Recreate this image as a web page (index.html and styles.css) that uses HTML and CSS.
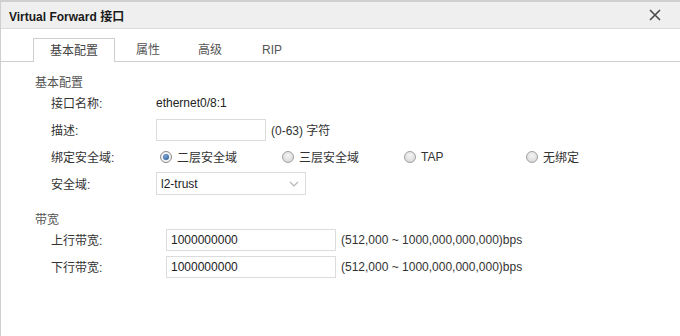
FILE: index.html
```html
<!DOCTYPE html>
<html lang="zh-CN">
<head>
  <meta charset="UTF-8">
  <title>Virtual Forward 接口</title>
  <link rel="stylesheet" href="styles.css">
</head>
<body>
  <div class="dialog">
    <!-- Title bar -->
    <div class="titlebar">
      <span class="title">Virtual Forward 接口</span>
      <span class="close">
        <svg width="12" height="12" viewBox="0 0 12 12">
          <path d="M1 1 L11 11 M11 1 L1 11" stroke="#4a4a4a" stroke-width="1.6" fill="none"/>
        </svg>
      </span>
    </div>

    <!-- Tabs -->
    <div class="tabs">
      <div class="tab active">基本配置</div>
      <div class="tab">属性</div>
      <div class="tab">高级</div>
      <div class="tab">RIP</div>
    </div>

    <!-- Basic config -->
    <div class="section">
      <div class="section-title">基本配置</div>
      <div class="row">
        <div class="label">接口名称:</div>
        <div class="value">ethernet0/8:1</div>
      </div>
      <div class="row">
        <div class="label">描述:</div>
        <div class="value">
          <span class="input desc"></span>
          <span class="hint">(0-63) 字符</span>
        </div>
      </div>
      <div class="row">
        <div class="label">绑定安全域:</div>
        <div class="value radios">
          <span class="option"><span class="radio checked"></span>二层安全域</span>
          <span class="option"><span class="radio"></span>三层安全域</span>
          <span class="option"><span class="radio"></span>TAP</span>
          <span class="option"><span class="radio"></span>无绑定</span>
        </div>
      </div>
      <div class="row">
        <div class="label">安全域:</div>
        <div class="value">
          <span class="select">
            <span>l2-trust</span>
            <svg width="10" height="6" viewBox="0 0 10 6">
              <path d="M1 1 L5 5 L9 1" stroke="#b5b5b5" stroke-width="1.2" fill="none"/>
            </svg>
          </span>
        </div>
      </div>
    </div>

    <!-- Bandwidth -->
    <div class="section bandwidth">
      <div class="section-title">带宽</div>
      <div class="row">
        <div class="label">上行带宽:</div>
        <div class="value">
          <span class="input bw">1000000000</span>
          <span class="hint">(512,000 ~ 1000,000,000,000)bps</span>
        </div>
      </div>
      <div class="row">
        <div class="label">下行带宽:</div>
        <div class="value">
          <span class="input bw">1000000000</span>
          <span class="hint">(512,000 ~ 1000,000,000,000)bps</span>
        </div>
      </div>
    </div>
  </div>
</body>
</html>
```

FILE: styles.css
```css
* {
  margin: 0;
  padding: 0;
  box-sizing: border-box;
}

body {
  font-family: "Liberation Sans", Arial, "Noto Sans CJK SC", sans-serif;
  font-size: 12px;
  color: #333;
  background: #fff;
}

.dialog {
  width: 680px;
  height: 336px;
  border-top: 2px solid #cfcfcf;
  border-left: 1px solid #cfcfcf;
  overflow: hidden;
}

/* Title bar */
.titlebar {
  height: 27px;
  background: #efefef;
  border-bottom: 1px solid #dadada;
  display: flex;
  align-items: center;
  justify-content: space-between;
  padding: 0 19px 0 8px;
}

.title {
  font-weight: bold;
  color: #1a1a1a;
}

.close {
  display: flex;
}

/* Tabs */
.tabs {
  display: flex;
  align-items: flex-end;
  padding: 9px 0 0 32px;
  border-bottom: 1px solid #cfcfcf;
  height: 33px;
}

.tab {
  width: 62px;
  height: 23px;
  line-height: 25px;
  text-align: center;
  color: #555;
}

.tab.active {
  width: 82px;
  margin-right: 2px;
  border: 1px solid #cfcfcf;
  border-bottom: none;
  background: #fff;
  height: 24px;
  margin-bottom: -1px;
  color: #444;
}

/* Sections */
.section {
  padding: 15px 0 0 34px;
}

.section.bandwidth {
  padding-top: 17px;
}

.section-title {
  line-height: 12px;
  color: #555;
}

.row {
  display: flex;
  align-items: center;
  height: 27px;
  padding-left: 16px;
}

.label {
  width: 105px;
  color: #333;
}

.bandwidth .label {
  width: 115px;
}

.value {
  display: flex;
  align-items: center;
  color: #222;
}

.input {
  display: inline-block;
  height: 22px;
  line-height: 20px;
  border: 1px solid #dcdcdc;
  padding-left: 4px;
  color: #222;
}

.input.desc {
  width: 110px;
}

.input.bw {
  width: 170px;
}

.hint {
  margin-left: 5px;
  color: #333;
}

/* Radios */
.radios {
  margin-left: 4px;
}

.option {
  display: flex;
  align-items: center;
  width: 122px;
  color: #333;
}

.radio {
  width: 12px;
  height: 12px;
  border-radius: 50%;
  border: 1px solid #a0a0a0;
  background: radial-gradient(circle at 50% 35%, #f4f4f4, #d4d4d4);
  margin-right: 5px;
  position: relative;
}

.radio.checked {
  background: #f2f2f2;
  border-color: #8a8a8a;
}

.radio.checked::after {
  content: "";
  position: absolute;
  left: 2px;
  top: 2px;
  width: 6px;
  height: 6px;
  border-radius: 50%;
  background: radial-gradient(circle at 40% 35%, #7fa8d8, #1f4f8c);
}

/* Select */
.select {
  width: 150px;
  height: 23px;
  border: 1px solid #dcdcdc;
  display: flex;
  align-items: center;
  justify-content: space-between;
  padding: 0 6px 0 4px;
  color: #222;
}
```
